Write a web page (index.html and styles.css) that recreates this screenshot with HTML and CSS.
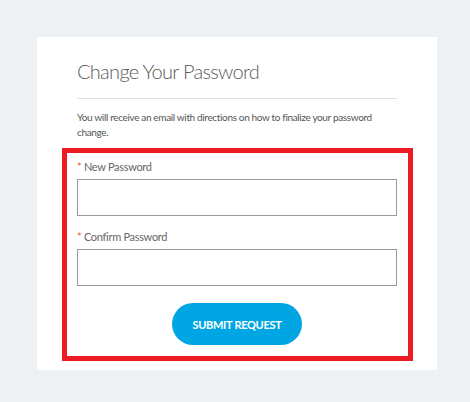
FILE: index.html
```html
<!DOCTYPE html>
<html>
<head>
<meta charset="utf-8">
<link rel="stylesheet" href="styles.css">
</head>
<body>
<div class="page">
  <div class="card">
    <h1 class="title">Change Your Password</h1>
    <hr class="rule">
    <p class="intro">You will receive an email with directions on how to finalize your password change.</p>
    <form class="form">
      <div class="field">
        <label class="label"><span class="req">*</span> New Password</label>
        <input class="input" type="password">
      </div>
      <div class="field">
        <label class="label"><span class="req">*</span> Confirm Password</label>
        <input class="input" type="password">
      </div>
      <div class="actions">
        <button class="btn" type="button">SUBMIT REQUEST</button>
      </div>
    </form>
  </div>
</div>
</body>
</html>
```
FILE: styles.css
```css
html, body {
  margin: 0;
  padding: 0;
  background: #eef1f4;
  font-family: Lato, "Open Sans", sans-serif;
}
.page {
  padding: 37px 0 0 37px;
}
.card {
  box-sizing: border-box;
  width: 400px;
  height: 333px;
  background: #fff;
  padding: 20px 40px 0 40px;
}
.title {
  margin: 0;
  font-weight: 300;
  font-size: 20px;
  letter-spacing: -0.7px;
  line-height: 28px;
  color: #5a5a5a;
}
.rule {
  margin: 13px 0 0 0;
  border: 0;
  border-top: 1px solid #e0e0e0;
}
.intro {
  margin: 11px 0 0 0;
  font-size: 10px;
  letter-spacing: -0.35px;
  line-height: 15px;
  color: #555;
}
.form {
  margin: 8px -16px 0 -15px;
  border: 5px solid #ed1c24;
  padding: 5px 11px 11px 10px;
}
.field {
  display: flex;
  flex-direction: column;
}
.label {
  font-size: 11px;
  letter-spacing: -0.3px;
  line-height: 18px;
  color: #666;
  margin-bottom: 3px;
}
.req {
  color: #e8553e;
}
.input {
  height: 37px;
  box-sizing: border-box;
  border: 1px solid #999;
  margin: 0 0 12px 0;
  padding: 0 8px;
}
.actions {
  display: flex;
  justify-content: center;
  padding-top: 5px;
}
.btn {
  width: 130px;
  height: 42px;
  border: 0;
  border-radius: 21px;
  background: #00a6e4;
  color: #fff;
  font-family: Lato, sans-serif;
  font-weight: 700;
  font-size: 11px;
  letter-spacing: -0.3px;
}
```
